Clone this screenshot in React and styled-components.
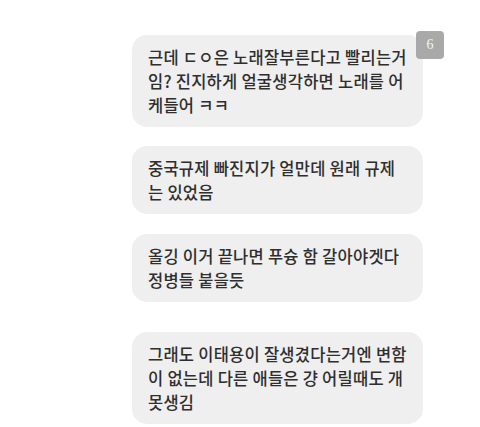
import React from 'react';
import styled, { createGlobalStyle } from 'styled-components';

const GlobalStyle = createGlobalStyle`
  body {
    margin: 0;
    background: #ffffff;
  }
`;

const Page = styled.div`
  display: flex;
  flex-direction: column;
  padding: 35px 0 0 132px;
  width: 480px;
  height: 427px;
  box-sizing: border-box;
  font-family: 'Noto Sans CJK KR', 'Noto Sans', sans-serif;
`;

const Row = styled.div`
  position: relative;
  width: 291px;
  margin-top: ${(p) => p.gap || 0}px;
`;

const Bubble = styled.div`
  background: #efefef;
  border-radius: 15px;
  padding: 10px 16px 10px;
  color: #2e2e2e;
  font-size: 16.5px;
  font-weight: 500;
  letter-spacing: 0.25px;
  line-height: 24px;

  .line {
    display: block;
    white-space: nowrap;
  }
`;

const Badge = styled.div`
  position: absolute;
  top: -4px;
  right: -21px;
  width: 28px;
  height: 28px;
  border-radius: 4px;
  background: #a9a9a9;
  color: #f4f4f4;
  font-family: 'Liberation Serif', serif;
  font-size: 14px;
  display: flex;
  align-items: center;
  justify-content: center;
`;

const messages = [
  {
    gap: 0,
    badge: '6',
    lines: ['근데 ㄷㅇ은 노래잘부른다고 빨리는거', '임? 진지하게 얼굴생각하면 노래를 어', '케들어 ㅋㅋ'],
  },
  { gap: 19, lines: ['중국규제 빠진지가 얼만데 원래 규제', '는 있었음'] },
  { gap: 20, lines: ['올깅 이거 끝나면 푸슝 함 갈아야겟다', '정병들 붙을듯'] },
  {
    gap: 30,
    lines: ['그래도 이태용이 잘생겼다는거엔 변함', '이 없는데 다른 애들은 걍 어릴때도 개', '못생김'],
  },
];

function App() {
  return (
    <Page>
      <GlobalStyle />
      {messages.map((m, i) => (
        <Row key={i} gap={m.gap}>
          <Bubble>
            {m.lines.map((l, j) => (
              <span className="line" key={j}>
                {l}
              </span>
            ))}
          </Bubble>
          {m.badge && <Badge>{m.badge}</Badge>}
        </Row>
      ))}
    </Page>
  );
}

export default App;
